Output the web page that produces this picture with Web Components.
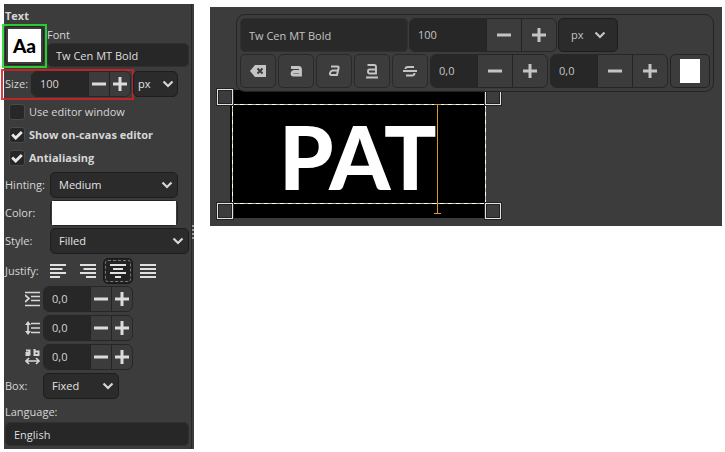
<!DOCTYPE html>
<html lang="en">
<head>
<meta charset="utf-8">
<title>Text tool</title>
<style>
body{margin:0;background:#fff;font:11px/16px "Open Sans","Noto Sans",sans-serif;color:#d6d6d6}
</style>
</head>
<body>
<text-workspace></text-workspace>
<script>
const base = `*{box-sizing:border-box}button,input,select{font:inherit;color:inherit;margin:0;padding:0;border:0;background:none;min-width:0;outline:0}svg{display:block}`;
const icons = {
  minus:'<path d="M1 8h14" stroke-width="3"/>',
  plus:'<path d="M1 8h14M8 1v14" stroke-width="3"/>',
  chevron:'<path d="M3.500 5.500L8 10l4.500-4.500" stroke-width="2.200"/>',
  check:'<path d="M2.500 7.500l4 4L13.500 4.500" stroke-width="3.200"/>',
  left:'<path d="M0 2h16M0 6h12.500M0 10h16M0 14h10" stroke-width="2"/>',
  right:'<path d="M0 2h16M3.500 6H16M0 10h16M6 14h10" stroke-width="2"/>',
  center:'<path d="M0 2h16M3 6h10M0 10h16M5 14h6" stroke-width="2"/>',
  fill:'<path d="M0 2h16M0 6h16M0 10h16M0 14h16" stroke-width="2"/>',
  indent:'<path d="M0 1.500h15M6 5.500h9M6 9.500h9M0 14.500h15M0 4l4 3.500L0 11" stroke-width="1.700"/>',
  line:'<path d="M6 3.500H15M6 8H15M6 12.500H15M3 3v10" stroke-width="1.700"/><path d="M0 5l3-4 3 4zM0 11l3 4 3-4z" fill="currentColor" stroke="none"/>',
  letter:'<path d="M1 1.500h3.500v5M4.500 4H1.500v2h3M9.500 0v6h4V2.500h-4" stroke-width="2"/><path d="M1 12h13M4 9l-3 3 3 3M11 9l3 3-3 3" stroke-width="1.600"/>',
  clear:'<path d="M0 8l5-6h11v12H5z" fill="currentColor" stroke="none"/><path d="M7.500 5.500l5 5M12.500 5.500l-5 5" stroke="#3c3c3c" stroke-width="2"/>',
  bold:'<path d="M3 4.500h7.500Q12.500 4.500 12.500 6.500V12H5.500Q4 12 4 10.500T5.500 8.500h7" stroke-width="2.800"/>',
  italic:'<path d="M5 3.500h6.500q1.500 0 1 2L11 12H5.500Q3.500 12 4 10t2.500-2.500H12" stroke-width="2"/>',
  under:'<path d="M3.500 2H10q2 0 2 2v6.500H5.500Q4 10.500 4 8.500t1.500-2H12M2 14.500h12" stroke-width="1.900"/>',
  strike:'<path d="M12 4H6Q3.500 4 3.500 6M1 8h14M4 12.500h6q2.500 0 2.500-2.500" stroke-width="1.900"/>'
};
const icon = (n,s=16) => `<svg width="${s}" height="${s}" viewBox="0 0 16 16" fill="none" stroke="currentColor" aria-hidden="true">${icons[n]}</svg>`;
const define = (name, render) => customElements.define(name, class extends HTMLElement {
  connectedCallback(){ if(!this.shadowRoot) this.attachShadow({mode:'open'}).innerHTML = `<style>${base}</style>` + render(this); }
});

define('spin-field', e => `<style>
:host{display:flex;align-items:center}
label{flex:0 0 var(--label,0px);display:flex;align-items:center}
label.pic{justify-content:flex-end;padding-right:2px}
.box{position:relative;display:flex;width:var(--w,90px);height:var(--h,26px);border:1px solid #272727;border-radius:6px;background:#3c3c3c;overflow:hidden}
input{flex:1;width:0;background:#272727;padding-left:8px}
button{flex:0 0 var(--bw,21px);border-left:1px solid #242424;display:grid;place-items:center;color:var(--glyph,#dcdcdc)}
</style>${e.hasAttribute('caption')||e.hasAttribute('icon')?`<label for="v" class="${e.hasAttribute('icon')?'pic':''}" aria-label="${e.getAttribute('name')}">${e.getAttribute('caption')||icon(e.getAttribute('icon'))}</label>`:''}
<div class="box"><input id="v" aria-label="${e.getAttribute('name')}" value="${e.getAttribute('value')}"><button aria-label="Decrease">${icon('minus')}</button><button aria-label="Increase">${icon('plus')}</button></div>`);

define('choice-field', e => `<style>
:host{display:flex;align-items:center}
label{flex:0 0 var(--label,0px)}
.box{position:relative;width:var(--w,45px);height:var(--h,26px)}
select{appearance:none;width:100%;height:100%;border:1px solid #1d1d1d;border-radius:5px;background:#2b2b2b;padding-left:var(--pad,8px);color:var(--glyph,#e4e4e4)}
svg{position:absolute;right:var(--arrow,2px);top:50%;translate:0 -50%;pointer-events:none}
</style>${e.hasAttribute('caption')?`<label for="s">${e.getAttribute('caption')}</label>`:''}
<div class="box"><select id="s" aria-label="${e.getAttribute('name')}"><option>${e.getAttribute('value')}</option></select>${icon('chevron')}</div>`);

define('check-option', e => `<style>
:host{display:block}
label{display:flex;align-items:center;gap:4px;height:23px;padding-left:4px}
:host([checked]) label{font-weight:700}
.tick{position:relative;width:16px;height:16px;color:#e8e8e8}
input{appearance:none;display:block;width:16px;height:16px;background:#272727;border:1px solid #4a4a4a;border-radius:3px}
svg{position:absolute;inset:1px;display:none;pointer-events:none}
input:checked + svg{display:block}
</style><label><span class="tick"><input type="checkbox" ${e.hasAttribute('checked')?'checked':''}>${icon('check',14)}</span><slot></slot></label>`);

define('color-field', e => `<style>
:host{display:flex;align-items:center}
label{flex:0 0 var(--label,0px)}
button{width:var(--w,128px);height:var(--h,26px);border:1px solid #222;border-radius:5px;padding:var(--inset,0 1px);background:#3c3c3c}
i{display:block;height:100%;background:#fff}
</style>${e.hasAttribute('caption')?`<label for="c">${e.getAttribute('caption')}</label>`:''}<button id="c" aria-label="Text color"><i></i></button>`);

define('icon-button', e => `<style>
:host{display:block}
button{width:var(--w,30px);height:var(--h,26px);display:grid;place-items:center;border:1px solid var(--edge,transparent);border-radius:5px;color:var(--glyph,#e0e0e0)}
:host([pressed]) button{background:#222;border-color:#191919;outline:1px dashed #777;outline-offset:-3px}
</style><button aria-label="${e.getAttribute('name')}">${icon(e.getAttribute('icon'))}</button>`);

define('text-options', () => `<style>
:host{position:relative;display:flex;flex-direction:column;gap:2px;flex:0 0 190px;background:#3c3c3c;padding:4px 5px 3px 1px}
:host::after{content:"";position:absolute;right:2px;top:0;bottom:0;width:1px;background:#272727}
.grip{position:absolute;right:0;top:221px;width:2px;height:14px;background:repeating-linear-gradient(#999 0 2px,transparent 2px 4px)}
h2{margin:0;font-size:inherit;line-height:16px;font-weight:700}
.mark{position:relative}
.mark::after{content:"";position:absolute;border:2px solid;pointer-events:none}
.font{display:flex;gap:3px;height:42px}
.green::after{inset:-2px -3px 0 -3px;border-color:#26dc30e6}
.sample{width:39px;height:39px;background:#3c3c3c;border:1px solid #222;border-radius:4px;padding:2px}
.sample b{display:grid;place-items:center;height:100%;background:#fff;color:#000;font:900 19px/1 Lato,sans-serif}
.name{flex:1;display:flex;flex-direction:column}
.name label{height:17px;line-height:18px}
input{width:100%;height:24px;background:#272727;border-radius:5px;border:1px solid #303030;padding-left:8px;color:#dedede}
.size{display:flex;gap:2px;height:28px;align-items:center}
.size spin-field{--label:26px;--w:100px}
.red{align-self:stretch;display:flex}
.red::after{inset:-1px -3px -2px -4px;border-color:#d21f24dd}
.checks{height:70px}
.wide{--label:45px;--w:128px;--arrow:3px}
.style{--w:139px}
.justify{display:flex;align-items:center;margin-top:2px}
.justify span{flex:0 0 38px}
.spins{display:flex;flex-direction:column;gap:3px;--label:38px;margin-bottom:1px}
.box{--label:38px;--w:76px;--arrow:3px}
.lang{display:flex;flex-direction:column;margin-top:2px}
.lang label{height:19px;line-height:18px}
</style>
<h2>Text</h2>
<div class="font"><div class="mark green"><button class="sample" aria-label="Choose font"><b>Aa</b></button></div><div class="name"><label for="f">Font</label><input id="f" value="Tw Cen MT Bold"></div></div>
<div class="size"><div class="mark red"><spin-field caption="Size:" name="Size" value="100"></spin-field></div><choice-field name="Unit" value="px" style="--pad:4px"></choice-field></div>
<div class="checks"><check-option>Use editor window</check-option><check-option checked>Show on-canvas editor</check-option><check-option checked>Antialiasing</check-option></div>
<choice-field class="wide" caption="Hinting:" name="Hinting" value="Medium"></choice-field>
<color-field class="wide" caption="Color:"></color-field>
<choice-field class="wide style" caption="Style:" name="Style" value="Filled"></choice-field>
<div class="justify"><span>Justify:</span><icon-button icon="left" name="Left justified"></icon-button><icon-button icon="right" name="Right justified"></icon-button><icon-button icon="center" name="Centered" pressed></icon-button><icon-button icon="fill" name="Filled"></icon-button></div>
<div class="spins"><spin-field icon="indent" name="Indentation" value="0,0"></spin-field><spin-field icon="line" name="Line spacing" value="0,0"></spin-field><spin-field icon="letter" name="Letter spacing" value="0,0"></spin-field></div>
<choice-field class="box" caption="Box:" name="Box" value="Fixed"></choice-field>
<div class="lang"><label for="l">Language:</label><input id="l" value="English"></div>
<div class="grip"></div>`);

define('text-toolbar', () => `<style>
:host{display:flex;flex-direction:column;gap:2px;padding:3px;border:1px solid #242424;border-radius:9px;background:#3c3c3cf2;color:#c4c4c4;--glyph:#c4c4c4;--h:34px;--edge:#292929;--bw:35px}
.row{display:flex;gap:2px}
.row.top{gap:1px}
input{width:168px;height:34px;background:#292929;border:1px solid #303030;border-radius:5px;padding-left:8px}
</style>
<div class="row top"><input aria-label="Font" value="Tw Cen MT Bold"><spin-field name="Size" value="100" style="--w:148px"></spin-field><choice-field name="Unit" value="px" style="--w:60px;--pad:12px;--arrow:10px"></choice-field></div>
<div class="row"><icon-button icon="clear" name="Clear style" style="--w:36px"></icon-button><icon-button icon="bold" name="Bold" style="--w:36px"></icon-button><icon-button icon="italic" name="Italic" style="--w:36px"></icon-button><icon-button icon="under" name="Underline" style="--w:36px"></icon-button><icon-button icon="strike" name="Strikethrough" style="--w:36px"></icon-button><spin-field name="Baseline" value="0,0" style="--w:118px"></spin-field><spin-field name="Kerning" value="0,0" style="--w:118px"></spin-field><color-field style="--w:40px;--inset:4px 9px"></color-field></div>`);

define('image-canvas', () => `<style>
:host{position:relative;display:block;flex:1;height:219px;background:#3c3c3c}
.image{position:absolute;left:20px;top:83px;width:256px;height:128px;background:#000}
.text{position:absolute;left:69px;top:96px;font:900 87px/108px Lato,sans-serif;color:#fff}
.frame{position:absolute;left:22px;top:97px;width:254px;height:100px;--h:repeating-linear-gradient(90deg,#fff 0 4px,#c9c99a 4px 8px);--v:repeating-linear-gradient(#fff 0 4px,#c9c99a 4px 8px);background:var(--h) top/100% 1px no-repeat,var(--h) bottom/100% 1px no-repeat,var(--v) left/1px 100% no-repeat,var(--v) right/1px 100% no-repeat}
.handle{position:absolute;width:16px;height:16px;border:1px solid #e2e2e2;outline:1px solid #222;background:#3c3c3c;box-shadow:inset 0 0 0 1px #222}
.caret{position:absolute;left:224px;top:97px;width:7px;height:110px;border:solid #d89b22;border-width:1px 0;background:linear-gradient(#d89b22,#d89b22) center/1px 100% no-repeat}
text-toolbar{position:absolute;left:26px;top:7px}
</style><div class="image"></div><div class="text">PAT</div><div class="frame"></div>
<div class="handle" style="left:7px;top:82px"></div><div class="handle" style="left:275px;top:82px"></div><div class="handle" style="left:7px;top:196px"></div><div class="handle" style="left:275px;top:196px"></div>
<div class="caret"></div><text-toolbar></text-toolbar>`);

define('text-workspace', () => `<style>
:host{display:flex;align-items:flex-start;gap:16px;padding:4px 3px 3px 4px}
image-canvas{margin-top:3px}
</style><text-options></text-options><image-canvas></image-canvas>`);
</script>
</body>
</html>
